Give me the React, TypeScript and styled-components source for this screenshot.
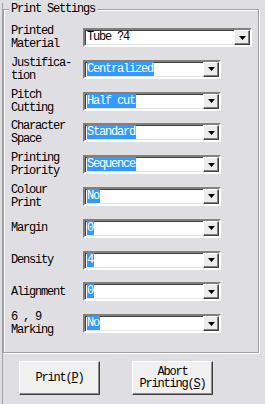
import styled, { createGlobalStyle } from "styled-components";

const GlobalStyle = createGlobalStyle`
  html, body {
    margin: 0;
    padding: 0;
    background: #dfdfe3;
  }
  body {
    font-family: "Liberation Mono", "DejaVu Sans Mono", monospace;
    font-size: 12px;
    letter-spacing: -1.2px;
    color: #000;
  }
`;

const Frame = styled.div`
  width: 265px;
  height: 404px;
  box-sizing: border-box;
  padding-left: 2px;
  overflow: hidden;
`;

const Inner = styled.div`
  height: 100%;
  border-left: 1px solid #a0a0a0;
`;

const Group = styled.fieldset`
  margin: 3px 0 0 0;
  width: 256px;
  box-sizing: border-box;
  padding: 12px 0 19px 7px;
  border: 1px solid #a0a0a0;
  box-shadow: 1px 1px 0 #fff, inset 1px 1px 0 #fff;
`;

const Legend = styled.legend`
  padding: 0 2px;
  margin-left: -2px;
  line-height: 13px;
  height: 13px;
  background: #dfdfe3;
`;

const Rows = styled.div`
  display: flex;
  flex-direction: column;
  gap: 12.8px;
`;

const Row = styled.div`
  display: flex;
  align-items: center;
  height: 19px;
`;

const Label = styled.div`
  width: 72px;
  line-height: 13px;
  white-space: pre;
  flex-shrink: 0;
  padding-top: 1px;
`;

const Combo = styled.div<{ $wide?: boolean }>`
  width: ${(p) => (p.$wide ? 169 : 138)}px;
  height: 19px;
  box-sizing: border-box;
  display: flex;
  align-items: center;
  background: #fff;
  border: 2px solid;
  border-color: #808080 #fff #fff #808080;
  box-shadow: inset 1px 1px 0 #404040, inset -1px -1px 0 #e4e4e4;
  padding: 1px 1px 1px 2px;
`;

const Value = styled.span<{ $selected?: boolean }>`
  flex: 1;
  line-height: 13px;
  white-space: pre;
  span {
    background: ${(p) => (p.$selected ? "#3399ff" : "transparent")};
    color: ${(p) => (p.$selected ? "#fff" : "#000")};
    padding-right: 1px;
  }
`;

const DropButton = styled.div`
  width: 16px;
  height: 15px;
  box-sizing: border-box;
  background: #ececec;
  border: 1px solid;
  border-color: #fff #404040 #404040 #fff;
  box-shadow: inset -1px -1px 0 #808080;
  display: flex;
  align-items: center;
  justify-content: center;
  margin-right: -1px;
`;

const ButtonBar = styled.div`
  display: flex;
  gap: 32px;
  padding: 8px 0 0 16px;
`;

const Button = styled.button`
  width: 81px;
  height: 34px;
  box-sizing: border-box;
  background: #f0f0f0;
  border: 1px solid;
  border-color: #fff #404040 #404040 #fff;
  box-shadow: inset -1px -1px 0 #8a8a8a;
  font-family: inherit;
  font-size: 12px;
  letter-spacing: -1.2px;
  line-height: 12px;
  color: #000;
  padding: 0;
  white-space: pre;
  u {
    text-decoration: underline;
  }
`;

const Arrow = () => (
  <svg width="7" height="4" viewBox="0 0 7 4">
    <polygon points="0,0 7,0 3.5,4" fill="#000" />
  </svg>
);

const rows = [
  { label: "Printed\nMaterial", value: "Tube ?4", wide: true, selected: false },
  { label: "Justifica-\ntion", value: "Centralized", selected: true },
  { label: "Pitch\nCutting", value: "Half cut", selected: true },
  { label: "Character\nSpace", value: "Standard", selected: true },
  { label: "Printing\nPriority", value: "Sequence", selected: true },
  { label: "Colour\nPrint", value: "No", selected: true },
  { label: "Margin", value: "0", selected: true },
  { label: "Density", value: "4", selected: true },
  { label: "Alignment", value: "0", selected: true },
  { label: "6 , 9\nMarking", value: "No", selected: true },
];

export default function App() {
  return (
    <>
      <GlobalStyle />
      <Frame>
        <Inner>
          <Group>
            <Legend>Print Settings</Legend>
            <Rows>
              {rows.map((r) => (
                <Row key={r.label}>
                  <Label>{r.label}</Label>
                  <Combo $wide={r.wide}>
                    <Value $selected={r.selected}>
                      <span>{r.value}</span>
                    </Value>
                    <DropButton>
                      <Arrow />
                    </DropButton>
                  </Combo>
                </Row>
              ))}
            </Rows>
          </Group>
          <ButtonBar>
            <Button>
              Print(<u>P</u>)
            </Button>
            <Button>
              {"Abort\nPrinting("}
              <u>S</u>)
            </Button>
          </ButtonBar>
        </Inner>
      </Frame>
    </>
  );
}
